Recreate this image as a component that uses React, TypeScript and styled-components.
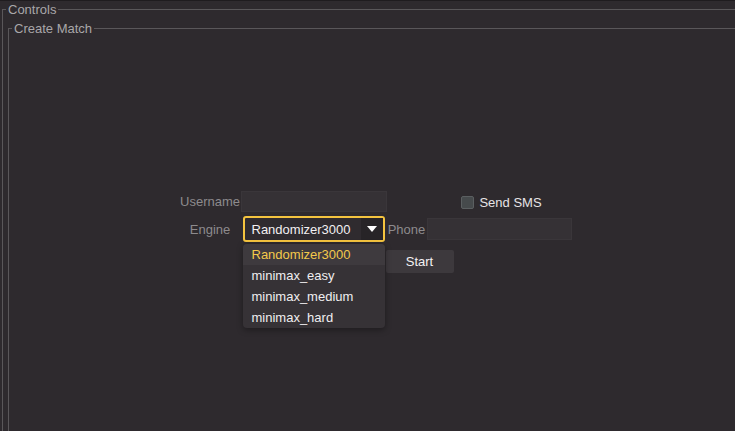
import React, { useState } from "react";
import styled, { createGlobalStyle } from "styled-components";

const GlobalStyle = createGlobalStyle`
  html, body {
    margin: 0;
    padding: 0;
    background: #2e2a2e;
    overflow: hidden;
  }
  body {
    font-family: "Liberation Sans", Arial, sans-serif;
    font-size: 13px;
  }
`;

const Page = styled.div`
  width: 735px;
  height: 431px;
  box-sizing: border-box;
  border-top: 1px solid #1f1c1f;
  padding-top: 1px;
  overflow: hidden;
`;

const Group = styled.fieldset<{ $width: number; $top: number }>`
  box-sizing: border-box;
  width: ${(p) => p.$width}px;
  margin: 0 0 0 2px;
  padding: ${(p) => p.$top}px 3px 20px 3px;
  border: 1px solid #5a575a;
  border-right: none;
  border-bottom: none;
  min-width: 0;
`;

const Legend = styled.legend`
  padding: 0 2px;
  font-size: 13px;
  line-height: 15px;
  color: #a9a7a9;
`;

const Center = styled.div`
  height: 391px;
  display: flex;
  align-items: center;
  justify-content: center;
`;

const Form = styled.div`
  display: grid;
  grid-template-columns: 61px 146px 40px 145px;
  grid-template-rows: 23px 26px 28px;
  row-gap: 3px;
  align-items: center;
`;

const Label = styled.span`
  color: #8d8a8d;
  text-align: center;
  font-size: 13px;
`;

const TextInput = styled.input<{ $h: number }>`
  box-sizing: border-box;
  width: 100%;
  height: ${(p) => p.$h}px;
  background: #353135;
  border: 1px solid #3a363a;
  outline: none;
  color: #eee;
  font: inherit;
  padding: 0 4px;
`;

const CheckRow = styled.label`
  justify-self: center;
  display: flex;
  align-items: center;
  gap: 5px;
  padding: 2px 0 0 5px;
  color: #e6e4e6;
  font-size: 13px;
`;

const Box = styled.span`
  box-sizing: border-box;
  width: 13px;
  height: 13px;
  border-radius: 2px;
  background: #464a4c;
  border: 1px solid #5b5f61;
`;

const SelectWrap = styled.div`
  position: relative;
  margin: 0 2px;
  height: 26px;
`;

const Trigger = styled.div`
  box-sizing: border-box;
  height: 26px;
  display: flex;
  align-items: stretch;
  border: 2px solid #f4c43f;
  border-radius: 3px;
  background: #2f2b2f;
  color: #f2f0f2;
`;

const TriggerText = styled.span`
  flex: 1;
  display: flex;
  align-items: center;
  padding-left: 7px;
  font-size: 13px;
`;

const Arrow = styled.span`
  width: 22px;
  display: flex;
  align-items: center;
  justify-content: center;
  background: #272427;
`;

const Menu = styled.ul`
  position: absolute;
  left: 0;
  right: 0;
  top: 28px;
  margin: 0;
  padding: 0;
  list-style: none;
  background: #363236;
  border-radius: 4px;
  overflow: hidden;
  box-shadow: 0 2px 6px rgba(0, 0, 0, 0.35);
  z-index: 2;
`;

const Item = styled.li<{ $active?: boolean }>`
  height: 21px;
  line-height: 21px;
  padding-left: 9px;
  font-size: 13px;
  color: ${(p) => (p.$active ? "#f3c94b" : "#f0eef0")};
  background: ${(p) => (p.$active ? "#3e3a3e" : "transparent")};
`;

const StartButton = styled.button`
  grid-column: 3;
  grid-row: 3;
  align-self: end;
  justify-self: start;
  width: 68px;
  height: 23px;
  margin-left: -1px;
  background: #3d393d;
  border: none;
  border-radius: 2px;
  color: #f4f2f4;
  font: inherit;
  font-size: 13px;
  padding: 0;
`;

const engines = ["Randomizer3000", "minimax_easy", "minimax_medium", "minimax_hard"];

export default function App() {
  const [engine] = useState(engines[0]);
  return (
    <>
      <GlobalStyle />
      <Page>
        <Group $width={750} $top={4}>
          <Legend>Controls</Legend>
          <Group $width={734} $top={0}>
            <Legend>Create Match</Legend>
            <Center>
              <Form>
                <Label>Username</Label>
                <TextInput $h={21} />
                <span />
                <CheckRow>
                  <Box />
                  Send SMS
                </CheckRow>

                <Label>Engine</Label>
                <SelectWrap>
                  <Trigger>
                    <TriggerText>{engine}</TriggerText>
                    <Arrow>
                      <svg width="10" height="6" viewBox="0 0 10 6">
                        <path d="M0 0 L10 0 L5 6 Z" fill="#ffffff" />
                      </svg>
                    </Arrow>
                  </Trigger>
                  <Menu>
                    {engines.map((e) => (
                      <Item key={e} $active={e === engine}>
                        {e}
                      </Item>
                    ))}
                  </Menu>
                </SelectWrap>
                <Label>Phone</Label>
                <TextInput $h={22} />

                <StartButton>Start</StartButton>
              </Form>
            </Center>
          </Group>
        </Group>
      </Page>
    </>
  );
}
